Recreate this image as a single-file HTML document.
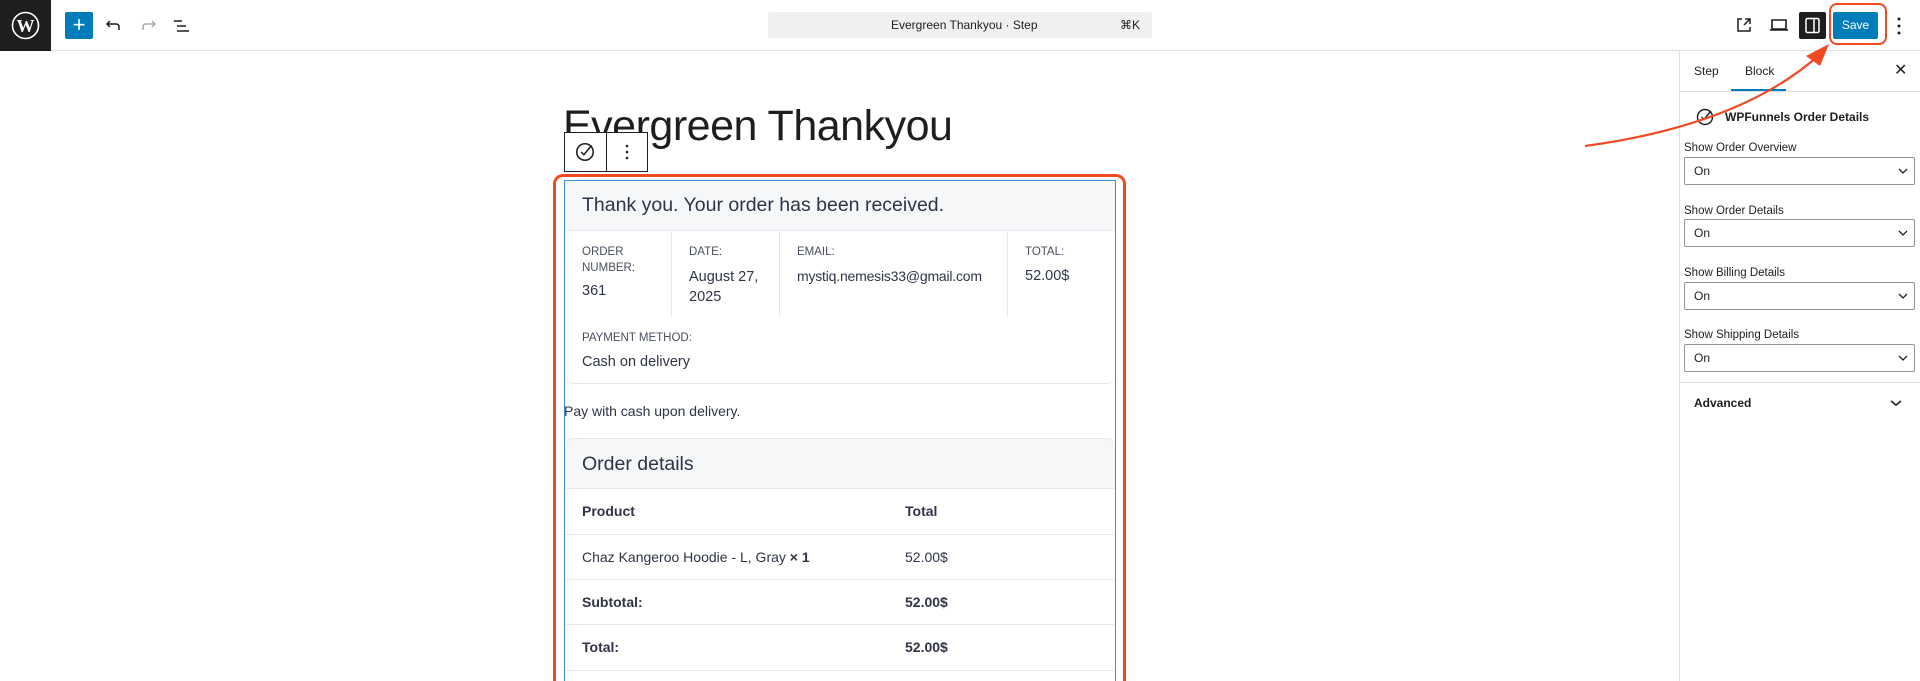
<!DOCTYPE html>
<html><head><meta charset="utf-8"><style>
*{box-sizing:border-box;margin:0;padding:0}
html,body{width:1920px;height:681px;overflow:hidden}
body{background:#fff;font-family:"Liberation Sans",sans-serif;position:relative;color:#1e1e1e}
.a{position:absolute}
.lbl{position:absolute;font-size:11.5px;color:#1e1e1e;left:1684px}
.sel{position:absolute;left:1684px;width:231px;height:28px;border:1px solid #949494;border-radius:2px;font-size:12px;padding-left:9px;line-height:26px}
.sel svg{position:absolute;right:6px;top:9px}
.c{color:#2f3447}
.cl{position:absolute;font-size:11.5px;color:#4a4f5e;text-transform:uppercase;line-height:16px}
.cv{position:absolute;font-size:14.5px;color:#2f3447;line-height:19px}
.row{position:absolute;left:565px;width:549px;border-top:1px solid #e6e8ee;height:45px}
.row span{position:absolute;top:14px;font-size:14px;color:#2f3447}
</style></head><body>
<!-- header -->
<div class="a" style="left:0;top:0;width:1920px;height:51px;border-bottom:1px solid #e0e0e0"></div>
<div class="a" style="left:0;top:0;width:51px;height:51px;background:#1e1e1e">
<svg width="51" height="51" viewBox="0 0 51 51"><circle cx="25.5" cy="25.5" r="13" fill="none" stroke="#fff" stroke-width="1.6"/><text x="25.5" y="32" font-family="Liberation Serif" font-weight="bold" font-size="18" fill="#fff" text-anchor="middle">W</text></svg></div>
<div class="a" style="left:65px;top:12px;width:28px;height:27px;background:#007cba;border-radius:2px;color:#fff;font-size:22px;line-height:26px;text-align:center">+</div>
<svg class="a" style="left:104px;top:16px" width="20" height="20" viewBox="0 0 20 20"><path d="M6 5 L3 8 L6 11 M3 8 H12 Q15 8 15 11 V14" fill="none" stroke="#1e1e1e" stroke-width="1.5"/></svg>
<svg class="a" style="left:138px;top:16px" width="20" height="20" viewBox="0 0 20 20"><path d="M14 5 L17 8 L14 11 M17 8 H8 Q5 8 5 11 V14" fill="none" stroke="#aaa" stroke-width="1.5"/></svg>
<svg class="a" style="left:172px;top:16px" width="20" height="20" viewBox="0 0 20 20"><path d="M2 5 H10 M5 10 H14 M5 15 H17" stroke="#1e1e1e" stroke-width="1.5"/></svg>
<div class="a" style="left:768px;top:12px;width:384px;height:26px;background:#f0f0f0;border-radius:3px;font-size:12px;line-height:26px">
<span class="a" style="left:123px">Evergreen Thankyou · Step</span><span class="a" style="right:12px">⌘K</span></div>
<svg class="a" style="left:1734px;top:15px" width="20" height="20" viewBox="0 0 20 20"><path d="M8 4 H4 V16 H16 V12 M10 10 L16 4 M11 4 H16 V9" fill="none" stroke="#1e1e1e" stroke-width="1.5"/></svg>
<svg class="a" style="left:1768px;top:15px" width="22" height="20" viewBox="0 0 22 20"><path d="M4 5 H18 V14 H4 Z M2 15 H20" fill="none" stroke="#1e1e1e" stroke-width="1.6"/></svg>
<div class="a" style="left:1799px;top:12px;width:27px;height:27px;background:#1e1e1e;border-radius:2px"><svg width="27" height="27"><rect x="7" y="6.5" width="13" height="14" rx="1.5" fill="none" stroke="#fff" stroke-width="1.5"/><path d="M15 7 V20" stroke="#fff" stroke-width="1.5"/></svg></div>
<div class="a" style="left:1833px;top:12px;width:45px;height:27px;background:#007cba;border-radius:2px;color:#fff;font-size:12px;line-height:27px;text-align:center">Save</div>
<div class="a" style="left:1829px;top:3px;width:58px;height:42px;border:2.5px solid #f04a23;border-radius:8px"></div>
<svg class="a" style="left:1896px;top:15px" width="6" height="22"><circle cx="3" cy="4" r="1.5" fill="#1e1e1e"/><circle cx="3" cy="11" r="1.5" fill="#1e1e1e"/><circle cx="3" cy="18" r="1.5" fill="#1e1e1e"/></svg>
<!-- sidebar -->
<div class="a" style="left:1679px;top:51px;width:1px;height:630px;background:#e0e0e0"></div>
<div class="a" style="left:1680px;top:91px;width:240px;height:1px;background:#e0e0e0"></div>
<div class="a" style="left:1694px;top:64px;font-size:12px">Step</div>
<div class="a" style="left:1745px;top:64px;font-size:12px">Block</div>
<div class="a" style="left:1731px;top:89px;width:55px;height:2px;background:#007cba"></div>
<div class="a" style="left:1894px;top:60px;font-size:16px">✕</div>
<svg class="a" style="left:1695px;top:107px" width="20" height="20" viewBox="0 0 20 20"><circle cx="10" cy="10" r="7.5" fill="none" stroke="#1e1e1e" stroke-width="1.4"/><path d="M6.5 10 L9 12.5 L16 4" fill="none" stroke="#1e1e1e" stroke-width="1.4"/></svg>
<div class="a" style="left:1725px;top:110px;font-size:12px;font-weight:bold">WPFunnels Order Details</div>
<div class="lbl" style="top:142px">Show Order Overview</div>
<div class="sel" style="top:157px">On<svg width="10" height="8"><path d="M1 2 L5 6 L9 2" fill="none" stroke="#1e1e1e" stroke-width="1.3"/></svg></div>
<div class="lbl" style="top:205px">Show Order Details</div>
<div class="sel" style="top:219px">On<svg width="10" height="8"><path d="M1 2 L5 6 L9 2" fill="none" stroke="#1e1e1e" stroke-width="1.3"/></svg></div>
<div class="lbl" style="top:267px">Show Billing Details</div>
<div class="sel" style="top:282px">On<svg width="10" height="8"><path d="M1 2 L5 6 L9 2" fill="none" stroke="#1e1e1e" stroke-width="1.3"/></svg></div>
<div class="lbl" style="top:329px">Show Shipping Details</div>
<div class="sel" style="top:344px">On<svg width="10" height="8"><path d="M1 2 L5 6 L9 2" fill="none" stroke="#1e1e1e" stroke-width="1.3"/></svg></div>
<div class="a" style="left:1680px;top:382px;width:240px;height:1px;background:#e0e0e0"></div>
<div class="a" style="left:1694px;top:396px;font-size:12px;font-weight:bold">Advanced</div>
<svg class="a" style="left:1890px;top:399px" width="12" height="8"><path d="M1 2 L6 6 L11 2" fill="none" stroke="#1e1e1e" stroke-width="1.5"/></svg>
<!-- content -->
<div class="a" style="left:563px;top:102px;font-size:43px;color:#1e1e1e;letter-spacing:-0.5px">Evergreen Thankyou</div>
<div class="a" style="left:564px;top:132px;width:84px;height:40px;background:#fff;border:1px solid #1e1e1e"></div>
<div class="a" style="left:606px;top:132px;width:1px;height:40px;background:#1e1e1e"></div>
<svg class="a" style="left:574px;top:141px" width="22" height="22" viewBox="0 0 20 20"><circle cx="10" cy="10" r="7.5" fill="none" stroke="#1e1e1e" stroke-width="1.4"/><path d="M6.5 10 L9 12.5 L16 4" fill="none" stroke="#1e1e1e" stroke-width="1.4"/></svg>
<svg class="a" style="left:624px;top:143px" width="6" height="18"><circle cx="3" cy="3" r="1.3" fill="#1e1e1e"/><circle cx="3" cy="9" r="1.3" fill="#1e1e1e"/><circle cx="3" cy="15" r="1.3" fill="#1e1e1e"/></svg>
<div class="a" style="left:553px;top:174px;width:573px;height:507px;border:3px solid #f04a23;border-bottom:none;border-radius:10px 10px 0 0"></div>
<div class="a" style="left:564px;top:180px;width:552px;height:501px;border:1px solid #3a93d1;border-bottom:none"></div>
<div class="a" style="left:565px;top:181px;width:550px;height:203px;border-bottom:1px solid #e6e8ee;border-radius:0 0 8px 8px"></div>
<div class="a" style="left:565px;top:181px;width:550px;height:50px;background:#f6f7f9;border-bottom:1px solid #e6e8ee"></div>
<div class="a c" style="left:582px;top:194px;font-size:19.5px">Thank you. Your order has been received.</div>
<div class="a" style="left:671px;top:231px;width:1px;height:86px;background:#e6e8ee"></div>
<div class="a" style="left:779px;top:231px;width:1px;height:86px;background:#e6e8ee"></div>
<div class="a" style="left:1007px;top:231px;width:1px;height:86px;background:#e6e8ee"></div>
<div class="cl" style="left:582px;top:244px">Order<br>Number:</div>
<div class="cv" style="left:582px;top:282px">361</div>
<div class="cl" style="left:689px;top:244px">Date:</div>
<div class="cv" style="left:689px;top:267px;line-height:20px">August 27,<br>2025</div>
<div class="cl" style="left:797px;top:244px">Email:</div>
<div class="cv" style="left:797px;top:267px;font-size:14px;letter-spacing:-0.2px">mystiq.nemesis33@gmail.com</div>
<div class="cl" style="left:1025px;top:244px">Total:</div>
<div class="cv" style="left:1025px;top:267px">52.00$</div>
<div class="cl" style="left:582px;top:330px">Payment method:</div>
<div class="cv" style="left:582px;top:353px">Cash on delivery</div>
<div class="a c" style="left:564px;top:403px;font-size:14px">Pay with cash upon delivery.</div>
<div class="a" style="left:565px;top:438px;width:550px;height:51px;background:#f6f7f9;border-top:1px solid #e6e8ee;border-bottom:1px solid #e6e8ee;border-radius:8px 8px 0 0"></div>
<div class="a c" style="left:582px;top:453px;font-size:19.5px">Order details</div>
<div class="row" style="top:489px;border-top:none"><span style="left:17px;font-weight:bold">Product</span><span style="left:340px;font-weight:bold">Total</span></div>
<div class="row" style="top:534px"><span style="left:17px">Chaz Kangeroo Hoodie - L, Gray <b>× 1</b></span><span style="left:340px">52.00$</span></div>
<div class="row" style="top:579px"><span style="left:17px;font-weight:bold">Subtotal:</span><span style="left:340px;font-weight:bold">52.00$</span></div>
<div class="row" style="top:624px"><span style="left:17px;font-weight:bold">Total:</span><span style="left:340px;font-weight:bold">52.00$</span></div>
<div class="a" style="left:565px;top:670px;width:549px;height:1px;background:#e6e8ee"></div>
<!-- arrow -->
<svg class="a" style="left:0;top:0" width="1920" height="681"><path d="M1585 146 Q1740 125 1818 56" fill="none" stroke="#f04a23" stroke-width="2.2"/><path d="M1829 44 L1806 56 L1820 66 Z" fill="#f04a23"/></svg>
</body></html>
